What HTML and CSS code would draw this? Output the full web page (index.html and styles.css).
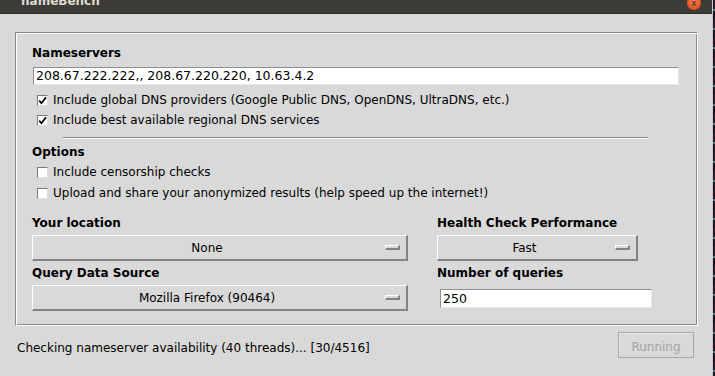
FILE: index.html
```html
<!DOCTYPE html>
<html lang="en">
<head>
    <meta charset="UTF-8">
    <meta name="viewport" content="width=device-width, initial-scale=1.0">
    <title>nameBench</title>
    <link rel="stylesheet" href="styles.css">
</head>
<body>
    <div class="desktop">
        <div class="window">
            <div class="titlebar">
                <span class="title">nameBench</span>
                <span class="close-btn">x</span>
            </div>

            <div class="content">
                <div class="frame">
                    <div class="label">Nameservers</div>
                    <div class="entry nameservers">208.67.222.222,, 208.67.220.220, 10.63.4.2</div>

                    <div class="check first">
                        <span class="box"><svg width="9" height="9" viewBox="0 0 9 9"><path d="M1.2 4.6 L3.4 7.2 L8 1.4" fill="none" stroke="#000" stroke-width="1.7"/></svg></span>
                        Include global DNS providers (Google Public DNS, OpenDNS, UltraDNS, etc.)
                    </div>
                    <div class="check">
                        <span class="box"><svg width="9" height="9" viewBox="0 0 9 9"><path d="M1.2 4.6 L3.4 7.2 L8 1.4" fill="none" stroke="#000" stroke-width="1.7"/></svg></span>
                        Include best available regional DNS services
                    </div>

                    <div class="separator"></div>

                    <div class="label options">Options</div>
                    <div class="check">
                        <span class="box"></span>
                        Include censorship checks
                    </div>
                    <div class="check spaced">
                        <span class="box"></span>
                        Upload and share your anonymized results (help speed up the internet!)
                    </div>

                    <div class="settings">
                        <div class="label">Your location</div>
                        <div class="label">Health Check Performance</div>

                        <div class="dropdown">
                            <span class="dropdown-text">None</span>
                            <span class="indicator"></span>
                        </div>
                        <div class="dropdown short">
                            <span class="dropdown-text">Fast</span>
                            <span class="indicator"></span>
                        </div>

                        <div class="label">Query Data Source</div>
                        <div class="label">Number of queries</div>

                        <div class="dropdown">
                            <span class="dropdown-text">Mozilla Firefox (90464)</span>
                            <span class="indicator"></span>
                        </div>
                        <div class="entry queries">250</div>
                    </div>
                </div>

                <div class="status-row">
                    <span class="status">Checking nameserver availability (40 threads)... [30/4516]</span>
                    <button type="button" class="run-btn" disabled>Running</button>
                </div>
            </div>
        </div>
        <div class="edge"></div>
    </div>
</body>
</html>
```

FILE: styles.css
```css
body {
    margin: 0;
    font-family: "DejaVu Sans", sans-serif;
    font-size: 12px;
    color: #000;
    background-color: #2a1828;
}

.desktop {
    display: flex;
    width: 715px;
    height: 376px;
    overflow: hidden;
}

.window {
    width: 712px;
    background-color: #d9d9d9;
    border-right: 1px solid #c8c8c8;
    display: flex;
    flex-direction: column;
}

.edge {
    flex: 1;
    background: repeating-linear-gradient(180deg, #2a1628 0 9px, #4a7f96 9px 11px, #1e1020 11px 19px);
}

/* title bar, cut off at the top of the shot */
.titlebar {
    position: relative;
    height: 14px;
    background-color: #3c3b37;
    border-bottom: 1px solid #2f2e2b;
    box-sizing: border-box;
    overflow: hidden;
}

.title {
    display: block;
    margin: -5px 0 0 21px;
    font-size: 12px;
    font-weight: bold;
    line-height: 13px;
    color: #dfdbd2;
}

.close-btn {
    position: absolute;
    left: 687px;
    top: -4px;
    width: 14px;
    height: 14px;
    border-radius: 50%;
    background: radial-gradient(circle at 50% 40%, #f58a5c, #e0521f 70%, #b8400f);
    color: #4a1a08;
    font-size: 9px;
    line-height: 14px;
    text-align: center;
}

.content {
    padding: 18px 14px 0 15px;
}

/* groove-relief group box */
.frame {
    box-sizing: border-box;
    width: 683px;
    padding: 10px 18px 14px 16px;
    border-top: 1px solid #8a8a8a;
    border-left: 1px solid #8a8a8a;
    border-right: 1px solid #fff;
    border-bottom: 1px solid #fff;
    box-shadow: inset 1px 1px 0 #fff, inset -1px -1px 0 #8a8a8a;
}

.label {
    font-weight: bold;
    line-height: 20px;
    height: 20px;
}

.options {
    margin-top: 3px;
}

.entry {
    box-sizing: border-box;
    background-color: #fff;
    border: 1px solid;
    border-color: #8f8f8f #e6e6e6 #e6e6e6 #8f8f8f;
    padding: 0 2px;
    white-space: nowrap;
}

.nameservers {
    margin: 4px 0 0 1px;
    height: 18px;
    line-height: 16px;
    font-size: 12.5px;
}

.check {
    display: flex;
    align-items: center;
    height: 20px;
    padding-left: 5px;
    white-space: nowrap;
}

.check.first {
    margin-top: 5px;
}

.check.spaced {
    margin-top: 1px;
}

.box {
    box-sizing: border-box;
    width: 11px;
    height: 11px;
    margin-right: 5px;
    background-color: #fff;
    border: 1px solid;
    border-color: #7a7a7a #dedede #dedede #7a7a7a;
    display: flex;
    align-items: center;
    justify-content: center;
}

.separator {
    margin: 7px 31px 0 31px;
    border-top: 1px solid #8a8a8a;
    border-bottom: 1px solid #fff;
}

.settings {
    margin-top: 10px;
    display: grid;
    grid-template-columns: 376px 215px;
    grid-template-rows: 20px 26px 20px 26px;
    column-gap: 29px;
    row-gap: 2px;
}

/* raised menubutton */
.dropdown {
    box-sizing: border-box;
    height: 26px;
    display: flex;
    align-items: center;
    border-style: solid;
    border-width: 1px 2px 2px 1px;
    border-color: #fff #828282 #828282 #fff;
}

.dropdown.short {
    width: 201px;
}

.dropdown-text {
    flex: 1;
    text-align: center;
}

.indicator {
    box-sizing: border-box;
    width: 15px;
    height: 5px;
    margin: 0 6px 0 4px;
    border-style: solid;
    border-width: 1px 2px 2px 1px;
    border-color: #fff #828282 #828282 #fff;
}

.queries {
    margin: 4px 0 0 3px;
    width: 212px;
    height: 19px;
    line-height: 17px;
    font-size: 12.5px;
}

.status-row {
    margin-top: 6px;
    padding: 0 4px 0 2px;
    display: flex;
    justify-content: space-between;
    align-items: center;
}

.status {
    white-space: nowrap;
    padding-top: 5px;
}

.run-btn {
    width: 76px;
    height: 26px;
    background-color: #d9d9d9;
    border: 1px solid #a9a9a9;
    box-shadow: inset 1px 1px 0 #e4e4e4;
    color: #a3a3a3;
    font-family: "DejaVu Sans", sans-serif;
    font-size: 12px;
    padding: 3px 0 0;
}
```
